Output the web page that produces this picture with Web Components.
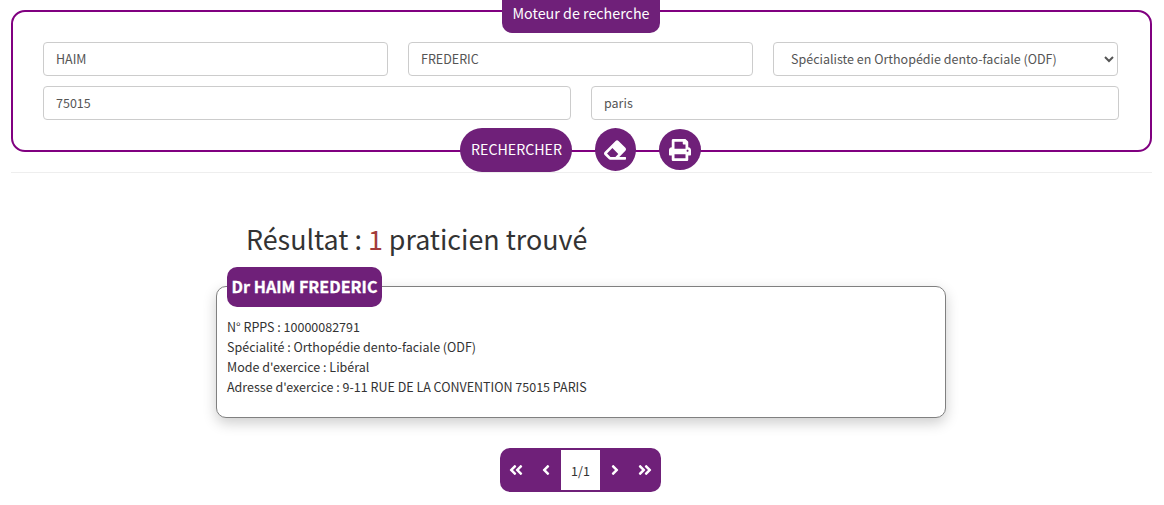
<!DOCTYPE html>
<html lang="fr">
<head>
<meta charset="utf-8">
<title>Moteur de recherche</title>
<style>
  html, body { margin: 0; background: #fff; }
  body { font-family: "Noto Sans CJK SC", "Source Sans Pro", "Open Sans", sans-serif; font-size: 12.5px; color: #333; padding: 10px 2px 0 0; }
  .row { display: flex; gap: 20px; }
  .row + .row { margin-top: 10px; }
  .cols { display: grid; grid-template-columns: repeat(3, 345px); gap: 20px; }
  hr { border: 0; border-top: 1px solid #eee; margin: 20px 10px 0 11px; }
  b { color: #a33c3c; font-weight: 400; }
</style>
</head>
<body>
<search-frame heading="Moteur de recherche">
  <div class="row cols">
    <text-field value="HAIM"></text-field>
    <text-field value="FREDERIC"></text-field>
    <select-field value="Spécialiste en Orthopédie dento-faciale (ODF)"></select-field>
  </div>
  <div class="row">
    <text-field value="75015"></text-field>
    <text-field value="paris"></text-field>
  </div>
  <pill-button slot="actions">RECHERCHER</pill-button>
  <round-button slot="actions" icon="eraser" w="41" h="43"></round-button>
  <round-button slot="actions" icon="print" w="42" h="41" top="1"></round-button>
</search-frame>
<hr>
<result-list>
  <span slot="title">Résultat : <b>1</b> praticien trouvé</span>
  <result-card name="Dr HAIM FREDERIC">
    <div>N° RPPS : 10000082791</div>
    <div>Spécialité : Orthopédie dento-faciale (ODF)</div>
    <div>Mode d'exercice : Libéral</div>
    <div>Adresse d'exercice : 9-11 RUE DE LA CONVENTION 75015 PARIS</div>
  </result-card>
</result-list>
<page-nav current="1/1"></page-nav>

<script>
const ICONS = {
  eraser: ["0 0 512 512", "M497.941 273.941c18.745-18.745 18.745-49.137 0-67.882l-160-160c-18.745-18.745-49.136-18.746-67.883 0l-256 256c-18.745 18.745-18.745 49.137 0 67.882l96 96A48.004 48.004 0 0 0 144 480h356c6.627 0 12-5.373 12-12v-40c0-6.627-5.373-12-12-12H355.883l142.058-142.059zm-302.627-62.627l137.373 137.373L265.373 416H150.628l-80-80 124.686-124.686z"],
  print: ["0 0 512 512", "M448 192V77.25c0-8.49-3.37-16.62-9.37-22.63L393.37 9.37c-6-6-14.14-9.37-22.63-9.37H96C78.33 0 64 14.33 64 32v160c-35.35 0-64 28.65-64 64v112c0 8.84 7.16 16 16 16h48v96c0 17.67 14.33 32 32 32h320c17.67 0 32-14.33 32-32v-96h48c8.84 0 16-7.16 16-16V256c0-35.35-28.65-64-64-64zm-64 256H128v-96h256v96zm0-224H128V64h192v48c0 8.84 7.16 16 16 16h48v96zm48 72c-13.25 0-24-10.75-24-24 0-13.26 10.75-24 24-24s24 10.74 24 24c0 13.25-10.75 24-24 24z"],
  first: ["0 0 448 512", "M223.7 239l136-136c9.4-9.4 24.6-9.4 33.9 0l22.6 22.6c9.4 9.4 9.4 24.6 0 33.9L319.9 256l96.4 96.4c9.4 9.4 9.4 24.6 0 33.9L393.7 409c-9.4 9.4-24.6 9.4-33.9 0l-136-136c-9.5-9.4-9.5-24.6-.1-34zm-192 34l136 136c9.4 9.4 24.6 9.4 33.9 0l22.6-22.6c9.4-9.4 9.4-24.6 0-33.9L127.9 256l96.4-96.4c9.4-9.4 9.4-24.6 0-33.9L201.7 103c-9.4-9.4-24.6-9.4-33.9 0l-136 136c-9.5 9.4-9.5 24.6-.1 34z"],
  prev: ["0 0 256 512", "M31.7 239l136-136c9.4-9.4 24.6-9.4 33.9 0l22.6 22.6c9.4 9.4 9.4 24.6 0 33.9L127.9 256l96.4 96.4c9.4 9.4 9.4 24.6 0 33.9L201.7 409c-9.4 9.4-24.6 9.4-33.9 0l-136-136c-9.5-9.4-9.5-24.6-.1-34z"]
};

function svgIcon(name, size, cls = "") {
  const [box, d] = ICONS[name];
  return `<svg class="${cls}" viewBox="${box}" height="${size}" fill="currentColor"><path d="${d}"/></svg>`;
}

class SearchFrame extends HTMLElement {
  constructor() {
    super();
    this.attachShadow({ mode: "open" });
  }
  connectedCallback() {
    this.shadowRoot.innerHTML = `
      <style>
        :host { display: flex; flex-direction: column; margin: 0 10px 0 11px; border: 2px solid #800080; border-radius: 14px; padding: 0 31px 0 30px; }
        .legend { align-self: center; margin: -12px 0 9px; height: 33px; box-sizing: border-box; width: 158px; background: #6f2079; color: #fff; font-size: 14.3px; line-height: 26px; text-align: center; border-radius: 0 0 10px 10px; }
        .actions { display: flex; justify-content: center; align-items: flex-start; gap: 23px; margin: 8px 0 -22px; padding-right: 2px; }
      </style>
      <div class="legend">${this.getAttribute("heading")}</div>
      <slot></slot>
      <div class="actions"><slot name="actions"></slot></div>`;
  }
}
customElements.define("search-frame", SearchFrame);

class TextField extends HTMLElement {
  constructor() {
    super();
    this.attachShadow({ mode: "open" });
  }
  connectedCallback() {
    this.shadowRoot.innerHTML = `
      <style>
        :host { display: block; flex: 1 1 0; min-width: 0; }
        input { display: block; box-sizing: border-box; width: 100%; height: 34px; padding: 0 12px 2px; border: 1px solid #ccc; border-radius: 4px; font: 12.5px "Noto Sans CJK SC", sans-serif; color: #555; background: #fff; outline: 0; }
      </style>
      <input type="text" value="${this.getAttribute("value")}">`;
  }
}
customElements.define("text-field", TextField);

class SelectField extends HTMLElement {
  constructor() {
    super();
    this.attachShadow({ mode: "open" });
  }
  connectedCallback() {
    const value = this.getAttribute("value");
    this.shadowRoot.innerHTML = `
      <style>
        :host { display: block; flex: 1 1 0; min-width: 0; }
        select { display: block; box-sizing: border-box; width: 100%; height: 34px; padding: 0 10px 2px 13px; border: 1px solid #ccc; border-radius: 4px; font: 12.5px "Noto Sans CJK SC", sans-serif; color: #555; background: #fff; outline: 0; }
      </style>
      <select><option>${value}</option></select>`;
  }
}
customElements.define("select-field", SelectField);

class PillButton extends HTMLElement {
  constructor() {
    super();
    this.attachShadow({ mode: "open" });
  }
  connectedCallback() {
    this.shadowRoot.innerHTML = `
      <style>
        :host { display: flex; align-items: center; justify-content: center; width: 112px; height: 44px; padding: 0 0 2px 2px; box-sizing: border-box; border-radius: 22px; background: #6f2079; color: #fff; font-size: 14.2px; cursor: pointer; }
      </style>
      <slot></slot>`;
  }
}
customElements.define("pill-button", PillButton);

class RoundButton extends HTMLElement {
  constructor() {
    super();
    this.attachShadow({ mode: "open" });
  }
  connectedCallback() {
    const w = this.getAttribute("w"), h = this.getAttribute("h"), top = this.getAttribute("top") || 0;
    this.shadowRoot.innerHTML = `
      <style>
        :host { display: flex; align-items: center; justify-content: center; width: ${w}px; height: ${h}px; margin-top: ${top}px; border-radius: 50%; background: #6f2079; color: #fff; cursor: pointer; }
      </style>
      ${svgIcon(this.getAttribute("icon"), 22)}`;
  }
}
customElements.define("round-button", RoundButton);

class ResultList extends HTMLElement {
  constructor() {
    super();
    this.attachShadow({ mode: "open" });
  }
  connectedCallback() {
    this.shadowRoot.innerHTML = `
      <style>
        :host { display: block; width: 730px; margin: 45px auto 0; }
        h2 { margin: 0 0 26px; padding-left: 30px; font-size: 26.85px; font-weight: 400; line-height: 42px; color: #333; }
      </style>
      <h2><slot name="title"></slot></h2>
      <slot></slot>`;
  }
}
customElements.define("result-list", ResultList);

class ResultCard extends HTMLElement {
  constructor() {
    super();
    this.attachShadow({ mode: "open" });
  }
  connectedCallback() {
    this.shadowRoot.innerHTML = `
      <style>
        :host { display: block; border: 1px solid #808080; border-radius: 10px; padding: 0 10px 20px; box-shadow: 0 5px 14px rgba(0,0,0,.2); line-height: 20px; background: #fff; }
        .name { display: table; box-sizing: border-box; width: 155px; margin: -20px 0 10px; height: 40px; line-height: 38px; text-align: center; white-space: nowrap; border-radius: 10px; background: #6f2079; color: #fff; font-size: 16.1px; font-weight: 700; -webkit-text-stroke: .3px #fff; }
      </style>
      <div class="name">${this.getAttribute("name")}</div>
      <slot></slot>`;
  }
}
customElements.define("result-card", ResultCard);

class PageNav extends HTMLElement {
  constructor() {
    super();
    this.attachShadow({ mode: "open" });
  }
  connectedCallback() {
    this.shadowRoot.innerHTML = `
      <style>
        :host { display: flex; width: 161px; box-sizing: border-box; height: 44px; margin: 30px 0 0 500px; padding: 2px 1px; border-radius: 10px; background: #6f2079; color: #fff; }
        .btn { width: 30px; display: flex; align-items: center; justify-content: center; }
        .flip { transform: scaleX(-1); }
        .cur { width: 39px; background: #fff; color: #333; display: flex; align-items: center; justify-content: center; font-size: 12.5px; }
      </style>
      <div class="btn">${svgIcon("first", 16)}</div>
      <div class="btn">${svgIcon("prev", 16)}</div>
      <div class="cur">${this.getAttribute("current")}</div>
      <div class="btn">${svgIcon("prev", 16, "flip")}</div>
      <div class="btn">${svgIcon("first", 16, "flip")}</div>`;
  }
}
customElements.define("page-nav", PageNav);
</script>
</body>
</html>
